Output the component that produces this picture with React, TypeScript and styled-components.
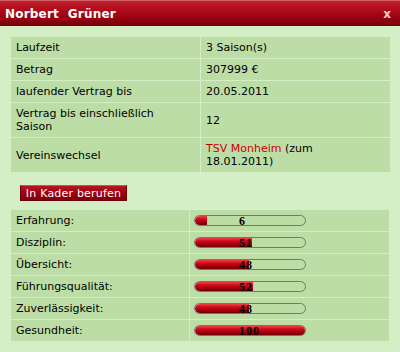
import styled, { createGlobalStyle } from "styled-components";

const GlobalStyle = createGlobalStyle`
  html, body {
    margin: 0;
    padding: 0;
    background: #d4efc5;
  }
  body {
    font-family: "DejaVu Sans", Verdana, sans-serif;
    font-size: 11px;
    color: #000;
  }
`;

const Window = styled.div`
  width: 400px;
  height: 352px;
  background: #d4efc5;
  overflow: hidden;
`;

const TitleBar = styled.header`
  height: 26px;
  display: flex;
  align-items: center;
  justify-content: space-between;
  padding: 0 9px 0 5px;
  border-top: 1px solid #d4606a;
  box-sizing: border-box;
  background: linear-gradient(#c0202e 0, #b00c1c 35%, #98000f 70%, #72000c 100%);
`;

const Title = styled.h1`
  margin: 0;
  font-size: 12px;
  font-weight: bold;
  color: #fff;
  white-space: pre;
  letter-spacing: 0.2px;
`;

const Close = styled.span`
  font-size: 12px;
  font-weight: bold;
  color: #f2d4d6;
  line-height: 1;
`;

const Body = styled.main`
  padding: 11px 11px 0;
  display: flex;
  flex-direction: column;
`;

const Grid = styled.div<{ $label: number; $value: number }>`
  display: grid;
  grid-template-columns: ${(p) => p.$label}px ${(p) => p.$value}px;
  gap: 1px;
`;

const Cell = styled.div<{ $tall?: boolean }>`
  background: #bcdda6;
  padding: 4px 5px;
  line-height: 13px;
  min-height: 13px;
  display: flex;
  align-items: center;
  ${(p) => (p.$tall ? "min-height: 26px;" : "")}
`;

const Club = styled.span`
  color: #cc0000;
`;

const ActionRow = styled.div`
  padding: 13px 0 9px 9px;
`;

const Button = styled.button`
  height: 16px;
  width: 107px;
  padding: 0;
  font-family: "DejaVu Sans", Verdana, sans-serif;
  font-size: 11px;
  letter-spacing: 0.2px;
  color: #fff;
  border: 1px solid #6a0008;
  border-top-color: #d05058;
  background: linear-gradient(#b81424 0, #a2000f 50%, #7e000b 100%);
  line-height: 13px;
  display: block;
`;

const BarCell = styled.div`
  background: #bcdda6;
  padding: 5px 0 5px 4px;
  height: 11px;
  display: flex;
  align-items: center;
`;

const Bar = styled.div`
  position: relative;
  width: 112px;
  height: 11px;
`;

const Track = styled.div`
  width: 100%;
  height: 100%;
  box-sizing: border-box;
  border: 1px solid #757575;
  border-radius: 6px;
  overflow: hidden;
`;

const Fill = styled.div`
  height: 100%;
  background: linear-gradient(#f0404c 0, #d4101e 30%, #b0000e 60%, #6e0008 100%);
  border-radius: 6px 0 0 6px;
`;

const Value = styled.span`
  position: absolute;
  left: 45px;
  top: 1px;
  font-family: "Liberation Serif", "Times New Roman", serif;
  font-weight: bold;
  font-size: 12px;
  letter-spacing: 1px;
  line-height: 11px;
  color: #000;
`;

const contract: [React.ReactNode, React.ReactNode, boolean?][] = [
  ["Laufzeit", "3 Saison(s)"],
  ["Betrag", "307999 €"],
  ["laufender Vertrag bis", "20.05.2011"],
  [
    <>
      Vertrag bis einschließlich
      <br />
      Saison
    </>,
    "12",
    true,
  ],
  [
    "Vereinswechsel",
    <>
      <Club>TSV Monheim</Club> (zum
      <br />
      18.01.2011)
    </>,
    true,
  ],
];

const skills = [
  { name: "Erfahrung:", value: 6 },
  { name: "Disziplin:", value: 51 },
  { name: "Übersicht:", value: 48 },
  { name: "Führungsqualität:", value: 52 },
  { name: "Zuverlässigkeit:", value: 48 },
  { name: "Gesundheit:", value: 100 },
];

export default function App() {
  return (
    <>
      <GlobalStyle />
      <Window>
        <TitleBar>
          <Title>{"Norbert  Grüner"}</Title>
          <Close>x</Close>
        </TitleBar>
        <Body>
          <Grid $label={189} $value={189}>
            {contract.flatMap(([label, value, tall], i) => [
              <Cell key={"l" + i} $tall={tall}>
                <span>{label}</span>
              </Cell>,
              <Cell key={"v" + i} $tall={tall}>
                <span>{value}</span>
              </Cell>,
            ])}
          </Grid>
          <ActionRow>
            <Button>In Kader berufen</Button>
          </ActionRow>
          <Grid $label={178} $value={199}>
            {skills.flatMap((s) => [
              <Cell key={s.name + "l"}>{s.name}</Cell>,
              <BarCell key={s.name + "v"}>
                <Bar>
                  <Track>
                    <Fill
                      style={{
                        width: `${Math.max(12, (s.value / 100) * 112)}px`,
                        borderRadius: s.value >= 100 ? "6px" : undefined,
                      }}
                    />
                  </Track>
                  <Value>{s.value}</Value>
                </Bar>
              </BarCell>,
            ])}
          </Grid>
        </Body>
      </Window>
    </>
  );
}
